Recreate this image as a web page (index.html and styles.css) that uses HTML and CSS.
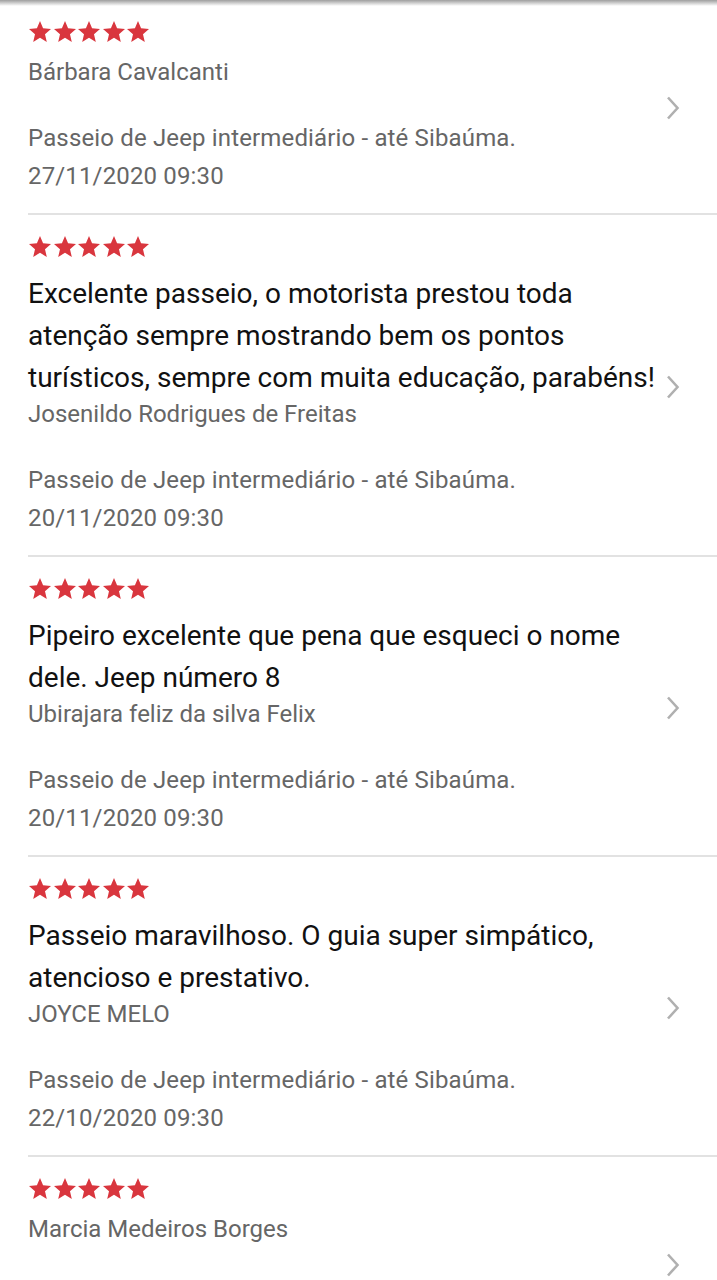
FILE: index.html
```html
<!DOCTYPE html>
<html lang="pt-BR">
<head>
    <meta charset="UTF-8">
    <meta name="viewport" content="width=device-width, initial-scale=1.0">
    <title>Avaliações</title>
    <link rel="stylesheet" href="styles.css">
</head>
<body>

    <div class="top-shadow"></div>

    <svg style="display:none">
        <symbol id="star" viewBox="2 2 20 19">
            <path d="M12 17.27L18.18 21l-1.64-7.03L22 9.24l-7.19-.61L12 2 9.19 8.63 2 9.24l5.46 4.73L5.82 21z"/>
        </symbol>
        <symbol id="chevron" viewBox="0 0 14 24">
            <path d="M2 1.5L11.5 12L2 22.5" fill="none" stroke="currentColor" stroke-width="2.6"/>
        </symbol>
    </svg>

    <div class="reviews">

        <div class="review">
            <div class="review-body">
                <div class="stars">
                    <svg><use href="#star"/></svg><svg><use href="#star"/></svg><svg><use href="#star"/></svg><svg><use href="#star"/></svg><svg><use href="#star"/></svg>
                </div>
                <div class="name">Bárbara Cavalcanti</div>
                <div class="tour">Passeio de Jeep intermediário - até Sibaúma.</div>
                <div class="date">27/11/2020 09:30</div>
            </div>
            <svg class="chevron"><use href="#chevron"/></svg>
        </div>

        <div class="review">
            <div class="review-body">
                <div class="stars">
                    <svg><use href="#star"/></svg><svg><use href="#star"/></svg><svg><use href="#star"/></svg><svg><use href="#star"/></svg><svg><use href="#star"/></svg>
                </div>
                <p class="comment">Excelente passeio, o motorista prestou toda atenção sempre mostrando bem os pontos turísticos, sempre com muita educação, parabéns!</p>
                <div class="name">Josenildo Rodrigues de Freitas</div>
                <div class="tour">Passeio de Jeep intermediário - até Sibaúma.</div>
                <div class="date">20/11/2020 09:30</div>
            </div>
            <svg class="chevron"><use href="#chevron"/></svg>
        </div>

        <div class="review">
            <div class="review-body">
                <div class="stars">
                    <svg><use href="#star"/></svg><svg><use href="#star"/></svg><svg><use href="#star"/></svg><svg><use href="#star"/></svg><svg><use href="#star"/></svg>
                </div>
                <p class="comment">Pipeiro excelente que pena que esqueci o nome dele. Jeep número 8</p>
                <div class="name">Ubirajara feliz da silva Felix</div>
                <div class="tour">Passeio de Jeep intermediário - até Sibaúma.</div>
                <div class="date">20/11/2020 09:30</div>
            </div>
            <svg class="chevron"><use href="#chevron"/></svg>
        </div>

        <div class="review">
            <div class="review-body">
                <div class="stars">
                    <svg><use href="#star"/></svg><svg><use href="#star"/></svg><svg><use href="#star"/></svg><svg><use href="#star"/></svg><svg><use href="#star"/></svg>
                </div>
                <p class="comment">Passeio maravilhoso. O guia super simpático, atencioso e prestativo.</p>
                <div class="name">JOYCE MELO</div>
                <div class="tour">Passeio de Jeep intermediário - até Sibaúma.</div>
                <div class="date">22/10/2020 09:30</div>
            </div>
            <svg class="chevron"><use href="#chevron"/></svg>
        </div>

        <div class="review">
            <div class="review-body">
                <div class="stars">
                    <svg><use href="#star"/></svg><svg><use href="#star"/></svg><svg><use href="#star"/></svg><svg><use href="#star"/></svg><svg><use href="#star"/></svg>
                </div>
                <div class="name">Marcia Medeiros Borges</div>
                <div class="tour">Passeio de Jeep intermediário - até Sibaúma.</div>
                <div class="date">22/10/2020 09:30</div>
            </div>
            <svg class="chevron"><use href="#chevron"/></svg>
        </div>

    </div>

</body>
</html>
```

FILE: styles.css
```css
html, body {
    margin: 0;
    padding: 0;
    background: #fff;
}
body {
    font-family: Roboto, "Noto Sans", sans-serif;
    color: #666;
    height: 1280px;
    overflow: hidden;
}
.top-shadow {
    position: absolute;
    top: 0;
    left: 0;
    right: 0;
    height: 6px;
    background: linear-gradient(#9e9e9e, rgba(255,255,255,0));
    z-index: 2;
}
.reviews {
    margin-left: 28px;
}
.review {
    display: flex;
    align-items: center;
    border-bottom: 2px solid #e2e2e2;
    padding: 21px 0 18px;
}
.review-body {
    flex: 1;
    min-width: 0;
}
.stars {
    display: flex;
    gap: 2.5px;
    height: 21px;
    margin-left: 1px;
    margin-bottom: 16px;
    color: #d9363e;
}
.stars svg {
    width: 22px;
    height: 21px;
    fill: currentColor;
}
.comment {
    margin: 0;
    font-size: 28px;
    line-height: 42px;
    color: #111;
}
.name {
    margin-top: 5px;
    margin-bottom: 33px;
    font-size: 24px;
    line-height: 28px;
}
.comment + .name {
    margin-top: 1px;
}
.tour,
.date {
    font-size: 24px;
    line-height: 38px;
    letter-spacing: 0.15px;
}
.chevron {
    width: 14px;
    height: 24px;
    margin-left: 1px;
    margin-right: 37px;
    color: #b0b0b0;
    flex-shrink: 0;
}
```
